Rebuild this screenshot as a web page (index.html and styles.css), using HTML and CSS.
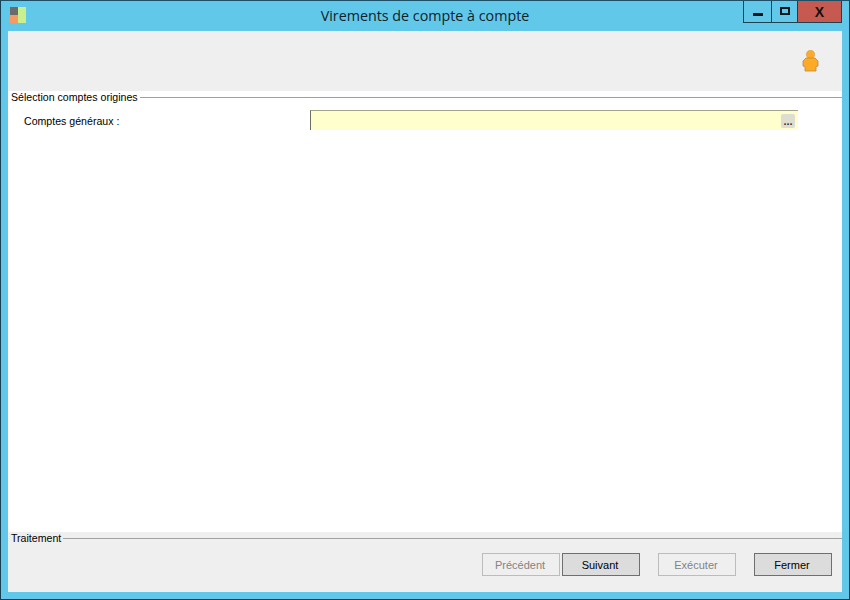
FILE: index.html
```html
<!DOCTYPE html>
<html lang="fr">
<head>
    <meta charset="UTF-8">
    <title>Virements de compte à compte</title>
    <link rel="stylesheet" href="styles.css">
</head>
<body>
    <div class="window">
        <div class="titlebar">
            <div class="app-icon">
                <svg width="16" height="16" viewBox="0 0 16 16">
                    <rect x="0" y="0" width="8" height="8" fill="#6b6b6b"/>
                    <rect x="0" y="8" width="8" height="8" fill="#f59a62"/>
                    <rect x="8" y="0" width="8" height="16" fill="#c9f08e"/>
                </svg>
            </div>
            <div class="title">Virements de compte à compte</div>
            <div class="window-buttons">
                <div class="win-btn win-min"><span class="min-glyph"></span></div>
                <div class="win-btn win-max"><span class="max-glyph"></span></div>
                <div class="win-btn win-close">X</div>
            </div>
        </div>
        <div class="client">
            <div class="header">
                <svg class="user-icon" width="17" height="22" viewBox="0 0 17 22">
                    <circle cx="8.5" cy="4.5" r="4.2" fill="#fbaa2a" stroke="#d1a050" stroke-width="0.6"/>
                    <path d="M4 8 H13 L16 11 V16 L14 16.5 V21 H3 V16.5 L1 16 V11 Z" fill="#fdab26" stroke="#b98a3e" stroke-width="0.8" stroke-linejoin="round"/>
                </svg>
            </div>
            <div class="content">
                <div class="group-title">
                    <span>Sélection comptes origines</span>
                    <div class="group-line"></div>
                </div>
                <div class="form-row">
                    <label class="form-label">Comptes généraux :</label>
                    <div class="lookup">
                        <button class="lookup-btn">...</button>
                    </div>
                </div>
            </div>
            <div class="footer">
                <div class="group-title">
                    <span>Traitement</span>
                    <div class="group-line"></div>
                </div>
                <div class="actions">
                    <button class="btn" disabled>Précédent</button>
                    <button class="btn">Suivant</button>
                    <button class="btn btn-run" disabled>Exécuter</button>
                    <button class="btn btn-close">Fermer</button>
                </div>
            </div>
        </div>
    </div>
</body>
</html>
```

FILE: styles.css
```css
html, body {
    margin: 0;
    padding: 0;
    height: 100%;
}

body {
    font-family: 'Liberation Sans', Arial, sans-serif;
    font-size: 10.6px;
    color: #000;
    background: #62c8ea;
}

.window {
    width: 850px;
    height: 600px;
    box-sizing: border-box;
    border: 1px solid #173f52;
    border-top-color: #1d5066;
    background: #62c8ea;
    display: flex;
    flex-direction: column;
}

.titlebar {
    height: 30px;
    display: grid;
    grid-template-columns: 1fr auto 1fr;
    align-items: start;
    flex: none;
}

.app-icon {
    padding: 6px 0 0 9px;
    line-height: 0;
}

.title {
    font-family: 'Open Sans', sans-serif;
    font-size: 14.3px;
    line-height: 30px;
    color: #10222c;
}

.window-buttons {
    justify-self: end;
    display: flex;
    height: 21px;
    margin-right: 7px;
    border: 1px solid #21404f;
    border-top: none;
}

.win-btn {
    display: flex;
    align-items: center;
    justify-content: center;
}

.win-min {
    width: 27px;
    border-right: 1px solid #21404f;
}

.win-max {
    width: 25px;
}

.win-close {
    width: 43px;
    background: #c75a50;
    border-left: 1px solid #21404f;
    font-family: 'Liberation Sans', Arial, sans-serif;
    font-weight: bold;
    font-size: 14px;
    color: #111;
}

.min-glyph {
    width: 10px;
    height: 3px;
    background: #0b1820;
    margin-top: 5px;
}

.max-glyph {
    width: 6px;
    height: 4px;
    border: 2px solid #0b1820;
    margin-bottom: 2px;
}

.client {
    flex: 1;
    margin: 0 7px 7px;
    display: flex;
    flex-direction: column;
    background: #fff;
}

.header {
    height: 60px;
    flex: none;
    background: #efefef;
    display: flex;
    justify-content: flex-end;
    align-items: flex-start;
    padding: 19px 23px 0 0;
    box-sizing: border-box;
}

.content {
    flex: 1;
    background: #fff;
}

.group-title {
    display: flex;
    align-items: center;
    height: 13px;
    line-height: 13px;
    padding-left: 3px;
}

.group-line {
    flex: 1;
    height: 1px;
    background: #a0a0a0;
    margin-left: 2px;
}

.form-row {
    display: flex;
    align-items: flex-start;
    margin-top: 6px;
}

.form-label {
    width: 302px;
    padding: 3px 0 0 16px;
    box-sizing: border-box;
    line-height: 16px;
}

.lookup {
    width: 488px;
    height: 20px;
    box-sizing: border-box;
    background: #ffffcd;
    border-top: 1px solid #a3a38a;
    border-left: 1px solid #6e6e60;
    display: flex;
    justify-content: flex-end;
    align-items: center;
    padding-right: 3px;
}

.lookup-btn {
    width: 14px;
    height: 14px;
    padding: 2px 0 0;
    border: none;
    border-radius: 2px;
    background: #deded0;
    color: #333;
    font-family: 'Liberation Sans', Arial, sans-serif;
    font-weight: bold;
    font-size: 11px;
    line-height: 9px;
}

.footer {
    height: 60px;
    flex: none;
    background: #efefef;
    box-sizing: border-box;
}

.actions {
    display: flex;
    justify-content: flex-end;
    gap: 2px;
    margin-top: 8px;
    padding-right: 10px;
}

.btn {
    width: 78px;
    height: 23px;
    box-sizing: border-box;
    padding: 0 2px 0 0;
    border: 1px solid #6f6f6f;
    background: #dcdcdc;
    color: #000;
    font-family: 'Liberation Sans', Arial, sans-serif;
    font-size: 11px;
}

.btn:disabled {
    border-color: #bcbcbc;
    background: #efefef;
    color: #838383;
}

.btn-run,
.btn-close {
    margin-left: 16px;
}
```
